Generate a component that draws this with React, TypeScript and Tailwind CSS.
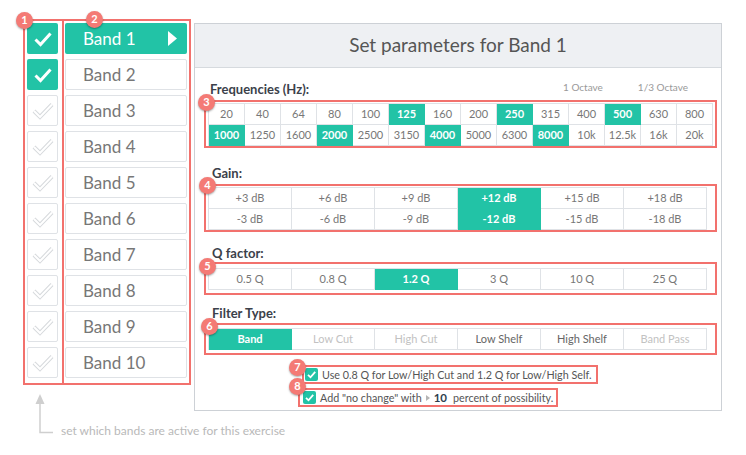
import React from "react";

const bands = Array.from({ length: 10 }, (_, i) => `Band ${i + 1}`);

const freqRows = [
  ["20", "40", "64", "80", "100", "125", "160", "200", "250", "315", "400", "500", "630", "800"],
  ["1000", "1250", "1600", "2000", "2500", "3150", "4000", "5000", "6300", "8000", "10k", "12.5k", "16k", "20k"],
];
const freqOn = [
  [5, 8, 11],
  [0, 3, 6, 9],
];

const gainRows = [
  ["+3 dB", "+6 dB", "+9 dB", "+12 dB", "+15 dB", "+18 dB"],
  ["-3 dB", "-6 dB", "-9 dB", "-12 dB", "-15 dB", "-18 dB"],
];

const qValues = ["0.5 Q", "0.8 Q", "1.2 Q", "3 Q", "10 Q", "25 Q"];

const filters = [
  { label: "Band", tone: "on" },
  { label: "Low Cut", tone: "off" },
  { label: "High Cut", tone: "off" },
  { label: "Low Shelf", tone: "dark" },
  { label: "High Shelf", tone: "dark" },
  { label: "Band Pass", tone: "off" },
];

// annotation badges, placed over the shot
const badges = [
  { n: 1, cls: "left-[16px] top-[12px]" },
  { n: 2, cls: "left-[86px] top-[11px]" },
  { n: 3, cls: "left-[198px] top-[94px]" },
  { n: 4, cls: "left-[199px] top-[177px]" },
  { n: 5, cls: "left-[199px] top-[258px]" },
  { n: 6, cls: "left-[201px] top-[318px]" },
  { n: 7, cls: "left-[289px] top-[359px]" },
  { n: 8, cls: "left-[289px] top-[378px]" },
];

const CheckOn = () => (
  <svg width="31" height="31" viewBox="0 0 31 31">
    <path d="M8.5 16.5 L13.5 21.5 L23.5 10.5" fill="none" stroke="#fff" strokeWidth="3" />
  </svg>
);

const CheckOff = () => (
  <svg width="31" height="31" viewBox="0 0 31 31">
    <path d="M7 16 L13 22 L25 9.5" fill="none" stroke="#d6d9dc" strokeWidth="4" strokeLinejoin="miter" />
    <path d="M7 16 L13 22 L25 9.5" fill="none" stroke="#fff" strokeWidth="2" strokeLinejoin="miter" />
  </svg>
);

const SmallCheck = () => (
  <span className="flex h-[13px] w-[13px] items-center justify-center rounded-[2px] bg-[#22c3a6]">
    <svg width="11" height="11" viewBox="0 0 11 11">
      <path d="M2 5.8 L4.5 8.3 L9.2 2.8" fill="none" stroke="#fff" strokeWidth="1.8" />
    </svg>
  </span>
);

const Cell = ({ on, children, w }: { on?: boolean; children: React.ReactNode; w: string }) => (
  <div
    className={`${w} flex h-[21px] items-center justify-center border-r border-b text-[11px] ${
      on ? "border-[#22c3a6] bg-[#22c3a6] font-bold text-white" : "border-[#dfe2e6] text-[#777]"
    }`}
  >
    {children}
  </div>
);

export default function App() {
  return (
    <div className="relative h-[455px] w-[746px] overflow-hidden bg-white font-['Lato',sans-serif]">
      <div className="flex items-start pl-[23px] pt-[19px]">
        {/* left column: active toggles + band list */}
        <div className="flex w-[168px] shrink-0 flex-col">
          <div className="flex">
            <div className="flex w-[41px] flex-col gap-[5px] border-2 border-[#f2716d] pb-[5px] pl-[2px] pt-[2px]">
              {bands.map((b, i) =>
                i < 2 ? (
                  <div key={b} className="h-[31px] w-[31px] rounded-[2px] bg-[#22c3a6]">
                    <CheckOn />
                  </div>
                ) : (
                  <div key={b} className="h-[31px] w-[31px] rounded-[2px] border border-[#dfe2e6] bg-white">
                    <div className="-m-px">
                      <CheckOff />
                    </div>
                  </div>
                )
              )}
            </div>
            <div className="-ml-[2px] flex w-[129px] flex-col gap-[5px] border-2 border-[#f2716d] pb-[5px] pl-px pt-[2px]">
              {bands.map((b, i) =>
                i === 0 ? (
                  <div
                    key={b}
                    className="flex h-[31px] w-[122px] items-center rounded-[2px] bg-[#22c3a6] pl-[18px] pr-[10px] text-[17px] text-white"
                  >
                    <span>{b}</span>
                    <svg className="ml-auto" width="9" height="15" viewBox="0 0 9 15">
                      <polygon points="0,0 9,7.5 0,15" fill="#fff" />
                    </svg>
                  </div>
                ) : (
                  <div
                    key={b}
                    className="flex h-[31px] w-[122px] items-center rounded-[2px] border border-[#dfe2e6] bg-white pl-[17px] text-[17px] text-[#777]"
                  >
                    {b}
                  </div>
                )
              )}
            </div>
          </div>
          <div className="mt-[9px] flex w-[168px] items-start whitespace-nowrap pl-[12px]">
            <svg className="shrink-0" width="20" height="41" viewBox="0 0 20 41">
              <polygon points="0.5,10 5,0 9.5,10" fill="#cfcfcf" />
              <path d="M5 9 V38.5 H18" fill="none" stroke="#cfcfcf" strokeWidth="1.5" />
            </svg>
            <span className="ml-[6px] mt-[30px] text-[12px] leading-[14px] text-[#b9b9b9]">
              set which bands are active for this exercise
            </span>
          </div>
        </div>

        {/* parameters panel */}
        <div className="ml-[3px] mt-[4px] flex h-[388px] w-[528px] shrink-0 flex-col border border-[#cdd1d6]">
          <div className="flex h-[44px] items-center justify-center border-b border-[#d6dade] bg-[#eef0f3] text-[19px] text-[#555]">
            Set parameters for Band 1
          </div>
          <div className="flex flex-col pl-[9px]">
            {/* frequencies */}
            <div className="mt-[13px] flex h-[16px] w-[513px] items-start pr-[29px]">
              <span className="ml-[6px] text-[13px] font-bold leading-[16px] text-[#3b414a]">Frequencies (Hz):</span>
              <span className="ml-auto text-[10px] leading-[12px] text-[#999]">1 Octave</span>
              <span className="ml-[35px] text-[10px] leading-[12px] text-[#999]">1/3 Octave</span>
            </div>
            <div className="mt-[3px] w-[513px] border-2 border-[#f2716d] pl-[2px] pt-px">
              <div className="flex w-fit flex-col border-l border-t border-[#dfe2e6]">
                {freqRows.map((row, r) => (
                  <div key={r} className="flex">
                    {row.map((f, c) => (
                      <Cell key={f} w="w-[36px]" on={freqOn[r].includes(c)}>
                        {f}
                      </Cell>
                    ))}
                  </div>
                ))}
              </div>
            </div>

            {/* gain */}
            <div className="ml-[8px] mt-[17px] text-[13px] font-bold leading-[16px] text-[#3b414a]">Gain:</div>
            <div className="mt-[3px] w-[513px] border-2 border-[#f2716d] pl-[2px] pt-px">
              <div className="flex w-fit flex-col border-l border-t border-[#dfe2e6]">
                {gainRows.map((row, r) => (
                  <div key={r} className="flex">
                    {row.map((g, c) => (
                      <Cell key={g} w="w-[83px]" on={c === 3}>
                        {g}
                      </Cell>
                    ))}
                  </div>
                ))}
              </div>
            </div>

            {/* q factor */}
            <div className="ml-[8px] mt-[13px] text-[13px] font-bold leading-[16px] text-[#3b414a]">Q factor:</div>
            <div className="mt-px w-[513px] border-2 border-[#f2716d] pb-[3px] pl-[2px] pt-[4px]">
              <div className="flex w-fit border-l border-t border-[#dfe2e6]">
                {qValues.map((q, c) => (
                  <Cell key={q} w="w-[83px]" on={c === 2}>
                    {q}
                  </Cell>
                ))}
              </div>
            </div>

            {/* filter type */}
            <div className="ml-[8px] mt-[10px] text-[13px] font-bold leading-[16px] text-[#3b414a]">Filter Type:</div>
            <div className="mt-[2px] w-[513px] border-2 border-[#f2716d] pb-[3px] pl-[2px] pt-[3px]">
              <div className="flex w-fit border-l border-t border-[#dfe2e6]">
                {filters.map((f) => (
                  <div
                    key={f.label}
                    className={`flex h-[21px] w-[83px] items-center justify-center border-r border-b text-[11px] ${
                      f.tone === "on"
                        ? "border-[#22c3a6] bg-[#22c3a6] font-bold text-white"
                        : f.tone === "dark"
                        ? "border-[#dfe2e6] text-[#666]"
                        : "border-[#dfe2e6] text-[#c2c2c2]"
                    }`}
                  >
                    {f.label}
                  </div>
                ))}
              </div>
            </div>

            {/* options */}
            <div className="ml-[98px] mt-[10px] flex h-[19px] w-fit items-center gap-[4px] border-2 border-[#f2716d] pl-px pr-[4px] text-[10.75px] leading-[15px] text-[#555]">
              <SmallCheck />
              <span>Use 0.8 Q for Low/High Cut and 1.2 Q for Low/High Self.</span>
            </div>
            <div className="ml-[94px] mt-[4px] flex h-[19px] w-fit items-center gap-[4px] border-2 border-[#f2716d] pl-[3px] pr-[3px] text-[10.75px] leading-[15px] text-[#555]">
              <SmallCheck />
              <span>Add "no change" with</span>
              <svg width="4" height="6" viewBox="0 0 4 6">
                <polygon points="0,0 4,3 0,6" fill="#b5b5b5" />
              </svg>
              <span className="text-[11.5px] font-bold text-[#2f3e4e]">10</span>
              <span className="ml-[2px]">percent of possibility.</span>
            </div>
          </div>
        </div>
      </div>

      {badges.map((b) => (
        <div
          key={b.n}
          className={`absolute ${b.cls} flex h-[17px] w-[17px] items-center justify-center rounded-full bg-[#f47a75] text-[11px] font-bold text-white shadow-[0_1px_2px_rgba(0,0,0,0.35)]`}
        >
          {b.n}
        </div>
      ))}
    </div>
  );
}
